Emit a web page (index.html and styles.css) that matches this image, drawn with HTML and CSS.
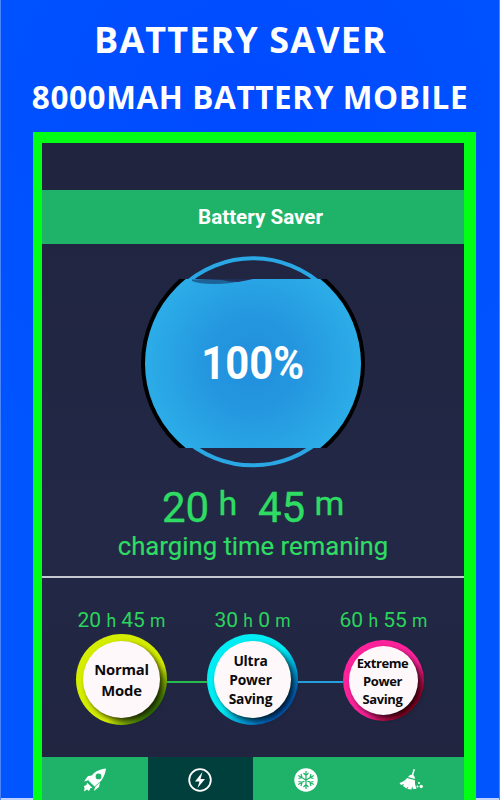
FILE: index.html
```html
<!DOCTYPE html>
<html lang="en">
<head>
<meta charset="utf-8">
<meta name="viewport" content="width=device-width, initial-scale=1.0">
<title>Battery Saver</title>
<link rel="stylesheet" href="styles.css">
</head>
<body>
<div class="promo">
  <h1>BATTERY SAVER</h1>
  <h2>8000MAH BATTERY MOBILE</h2>
</div>
<main class="phone">
  <header>Battery Saver</header>
  <section class="gauge">
    <svg width="230" height="216" viewBox="138 252 230 216">
      <defs>
        <radialGradient id="water" cx="253" cy="364" r="112" gradientUnits="userSpaceOnUse">
          <stop offset="0" stop-color="#218fdd"/>
          <stop offset=".4" stop-color="#2496df"/>
          <stop offset="1" stop-color="#2caee8"/>
        </radialGradient>
        <clipPath id="level"><rect x="138" y="279" width="230" height="169"/></clipPath>
      </defs>
      <ellipse cx="253" cy="361.8" rx="103" ry="103.5" fill="none" stroke="#2aa7e5" stroke-width="4"/>
      <g clip-path="url(#level)">
        <circle cx="253" cy="363.5" r="112" fill="#000"/>
        <circle cx="253" cy="363.5" r="108" fill="url(#water)"/>
      </g>
      <path d="M192 279.500Q200 279 222 279L240 281Q230 284 215 284Q198 284 192 281Z" fill="#1d6398"/>
      <path d="M196 279H253Q244 281 238 282Q230 282 222 280Z" fill="#20305a"/>
    </svg>
    <strong>100%</strong>
  </section>
  <section class="remaining">
    <div class="time"><span>20</span><sup>h</sup><span>45</span><sup>m</sup></div>
    <p>charging time remaning</p>
  </section>
  <section class="modes">
    <div class="mode">
      <div class="hours">20 <small>h</small> 45 <small>m</small></div>
      <div class="ring normal"><div class="disc">Normal<br>Mode</div></div>
    </div>
    <i class="line green"></i>
    <div class="mode">
      <div class="hours">30 <small>h</small> 0 <small>m</small></div>
      <div class="ring ultra"><div class="disc">Ultra<br>Power<br>Saving</div></div>
    </div>
    <i class="line blue"></i>
    <div class="mode">
      <div class="hours">60 <small>h</small> 55 <small>m</small></div>
      <div class="ring extreme"><div class="disc">Extreme<br>Power<br>Saving</div></div>
    </div>
  </section>
  <nav>
    <a><svg viewBox="0 0 24 24"><path fill-rule="evenodd" d="M23 .5Q16 1 11 5L5 12 11.500 18.500 18 13Q22 8 23 .5ZM15.500 5.500a2.900 2.900 0 1 1 0 5.800a2.900 2.900 0 1 1 0-5.800Z"/><path d="M9.500 7.500L5 8 1 13.500 4.500 12.500ZM17 14.500L16 19 11 23 12 19ZM4 14.500L9.500 20 7.500 20 6 23 4 21.500 1 23.500 1.500 20.500 1 18 3.500 17Z"/></svg></a>
    <a class="active"><svg viewBox="0 0 24 24"><circle cx="12" cy="12" r="10.800" fill="none" stroke="#fff" stroke-width="1.800"/><path d="M14.500 4L7 13.500H11.500L9.500 20 17 11H12.500Z"/></svg></a>
    <a><svg viewBox="0 0 24 24"><circle cx="12" cy="12" r="11.700"/><path class="flake" d="M12 3V21M4.200 7.500L19.800 16.500M4.200 16.500L19.800 7.500M9.500 5L12 7.500 14.500 5M9.500 19L12 16.500 14.500 19M4.500 10.500L8 9.500 7 6M17 18L16 14.500 19.500 13.500M4.500 13.500L8 14.500 7 18M17 6L16 9.500 19.500 10.500"/></svg></a>
    <a><svg viewBox="0 0 24 24"><path d="M14.500 1L16 1.500 14.300 7 15.500 8.500 16 11 9 9 11 7 12.800 6.800ZM8 10L16 12.300 16 16 17.500 21H14L13 18 12.500 21.500 8.500 21 9.500 18 7.500 20.500 4 18 5 16 2 17 .5 15Q6 13 8 10Z"/><circle cx="20" cy="15" r="1"/><circle cx="18.500" cy="18.500" r="1"/><circle cx="22.200" cy="18.500" r="1.700"/></svg></a>
  </nav>
</main>
</body>
</html>
```

FILE: styles.css
```css
* { box-sizing: border-box; }
body {
  margin: 0;
  height: 800px;
  overflow: hidden;
  background: linear-gradient(transparent 798px, #bdd2fb 798px), radial-gradient(circle at 50% 15%, #004aff, #0055ff 55%);
  border-left: 1px solid #4a84f5;
  border-right: 1px solid #4a84f5;
  font-family: Roboto, sans-serif;
}
.promo { height: 132px; padding-top: 18px; text-align: center; color: #fff; font-family: "Open Sans", sans-serif; }
h1, h2 { margin: 0; font-weight: 700; white-space: nowrap; }
h1 { font-size: 36px; line-height: 44px; letter-spacing: 1.1px; margin-left: -19px; }
h2 { font-size: 31.5px; line-height: 36px; margin-top: 17px; letter-spacing: .6px; }
.phone {
  width: 443px;
  height: 668px;
  margin-left: 32px;
  padding-top: 47px;
  border: solid #00ff15;
  border-width: 11px 12px 0 9px;
  background: linear-gradient(#20243f, #222846 60%, #20243f);
}
header {
  height: 54px;
  background: #1eb368;
  color: #fff;
  font-size: 20.6px;
  font-weight: 700;
  line-height: 55px;
  text-align: center;
  padding-left: 15px;
}
.gauge { display: grid; justify-items: center; height: 236px; padding-top: 8px; }
.gauge svg, .gauge strong { grid-area: 1 / 1; }
.gauge strong { align-self: start; margin-top: 82px; color: #fff; font-size: 47px; line-height: 58px; transform: scaleX(.89); }
.remaining { height: 98px; color: #2fdc63; text-align: center; border-bottom: 2px solid #c5c7d1; }
.time { display: flex; justify-content: center; padding-right: 3px; font-size: 42px; line-height: 55px; -webkit-text-stroke: .4px; }
.time span { width: 48px; }
.time span + sup { width: 17px; margin: 0 22px 0 9px; }
.time sup { font-size: 34px; line-height: 46px; }
.time sup:last-child { width: 27px; margin: 0 0 0 9px; }
.remaining p { margin: -4px 0 0; font-size: 25.7px; line-height: 30px; -webkit-text-stroke: .2px; }
.modes { display: flex; height: 179px; padding: 29px 34px 0; }
.mode { width: 91px; display: flex; flex-direction: column; align-items: center; }
.hours { font-size: 21px; line-height: 26px; color: #2bd45c; white-space: nowrap; }
.hours small { font-size: 17.5px; }
.ring { width: 91px; height: 91px; padding: 7px; border-radius: 50%; }
.disc {
  display: grid;
  place-content: center;
  width: 77px;
  height: 77px;
  border-radius: 50%;
  background: #fff8fa;
  color: #0b0b0d;
  text-align: center;
  font: 700 13.8px/19px "Open Sans", sans-serif;
  letter-spacing: -.2px;
  box-shadow: 3px 3px 5px rgba(0, 0, 0, .75);
}
.normal { background: linear-gradient(135deg, #d5ed00 65%, #307400 85%, #9acc00); }
.ultra { background: linear-gradient(135deg, #00edf4 50%, #0058b8 83%, #009add); }
.ultra .disc { padding-right: 4px; }
.extreme { width: 81px; height: 81px; margin-top: 6px; padding: 6px; background: linear-gradient(135deg, #ff239b 60%, #9d0022 83%, #da0044); }
.extreme .disc { width: 69px; height: 69px; padding-right: 2px; font-size: 13px; line-height: 18px; letter-spacing: -.4px; }
.normal .disc { font-size: 14.8px; line-height: 21px; }
.line { width: 40px; height: 2px; margin-top: 74px; background: #24bd4e; }
.line.blue { width: 45px; margin-right: -5px; background: #269edb; }
nav { display: grid; grid-template-columns: repeat(4, 1fr); height: 43px; background: #1eb368; }
nav a { display: grid; place-items: center; padding-top: 3px; }
nav .active { background: #003f3c; }
nav svg { width: 24px; height: 24px; fill: #fff; }
.flake { fill: none; stroke: #1eb368; stroke-width: 1.2; }
```
